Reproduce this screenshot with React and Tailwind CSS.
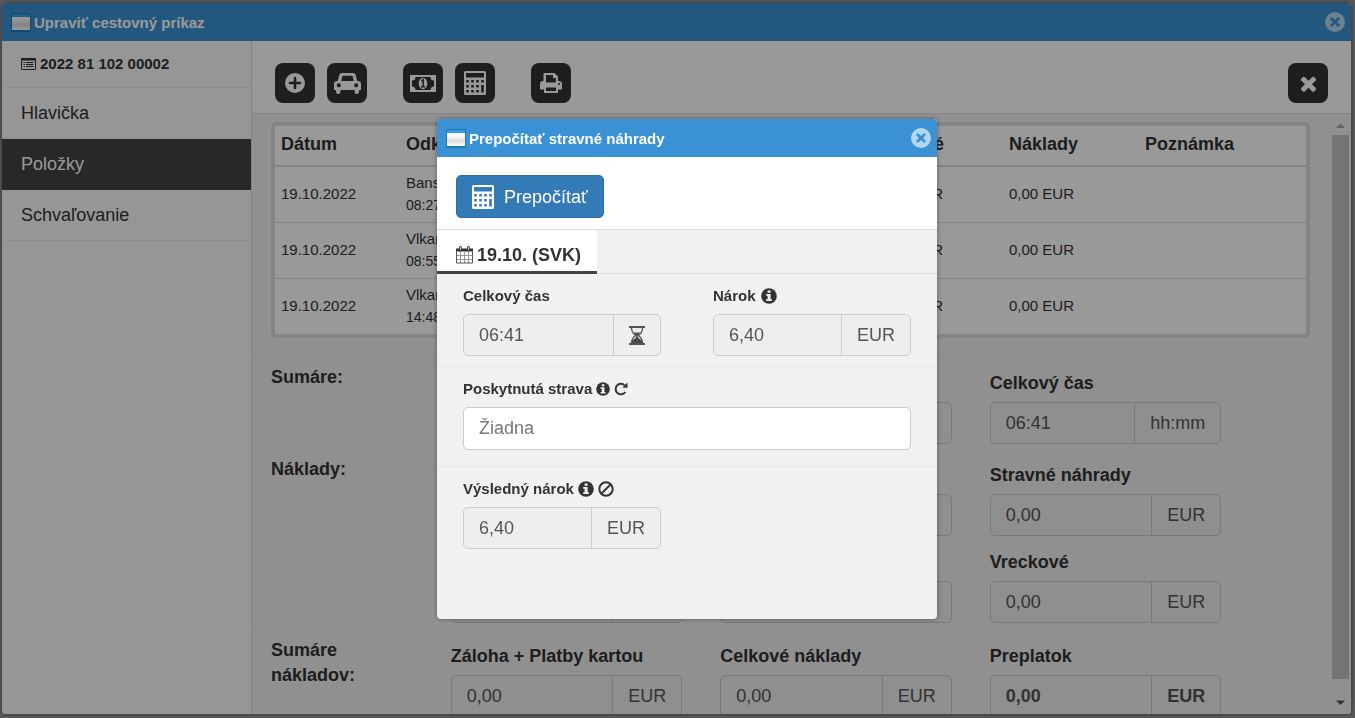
import { useState } from "react";

const MENU = ["Hlavička", "Položky", "Schvaľovanie"];

const TRIPS = [
  { date: "19.10.2022", from: "Banská", start: "08:27" },
  { date: "19.10.2022", from: "Vlkanová", start: "08:55" },
  { date: "19.10.2022", from: "Vlkanová", start: "14:48" },
];

function WindowIcon() {
  return (
    <svg width="20" height="19" viewBox="0 0 20 19" aria-hidden="true">
      <defs>
        <linearGradient id="pane" x1="0" y1="0" x2="0" y2="1">
          <stop offset="0" stopColor="#fff" />
          <stop offset="0.3" stopColor="#f6f6f6" />
          <stop offset="0.6" stopColor="#dcdcdc" />
          <stop offset="1" stopColor="#fff" />
        </linearGradient>
      </defs>
      <rect width="20" height="19" rx="1" fill="#1c7db4" />
      <rect x="1" y="1" width="18" height="4" fill="#3a9bdc" />
      <rect x="1" y="4" width="18" height="13" fill="url(#pane)" />
    </svg>
  );
}

function CloseCircle() {
  return (
    <svg width="20" height="20" viewBox="0 0 20 20" aria-hidden="true">
      <circle cx="10" cy="10" r="10" fill="#fff" fillOpacity="0.62" />
      <path d="M6.700 6.700l6.600 6.600M13.300 6.700l-6.600 6.600" stroke="#3a92d4" strokeWidth="2.800" strokeLinecap="round" />
    </svg>
  );
}

function PlusIcon() {
  return (
    <svg width="20" height="20" viewBox="0 0 20 20" aria-hidden="true">
      <circle cx="10" cy="10" r="10" fill="currentColor" />
      <path d="M10 5v10M5 10h10" stroke="#333" strokeWidth="2.600" strokeLinecap="round" />
    </svg>
  );
}

function CarIcon() {
  return (
    <svg width="27" height="21" viewBox="0 0 27 21" fill="currentColor" aria-hidden="true">
      <path
        fillRule="evenodd"
        d="M8 0h11q2.200 0 2.800 2.200L23.200 8h.8q3 0 3 3v5.500q0 .5-.5.500H25v1.700a2.200 2.200 0 0 1-4.400 0V17H6.400v1.700a2.200 2.200 0 0 1-4.400 0V17H.5q-.5 0-.5-.5V11q0-3 3-3h.8L5.200 2.200Q5.800 0 8 0zM7.200 8h12.600l-1.200-4.700q-.1-.5-.5-.5H8.900q-.4 0-.5.5zM4.800 10.200a2.100 2.100 0 1 0 0 4.200 2.100 2.100 0 0 0 0-4.200zM22.200 10.200a2.100 2.100 0 1 0 0 4.200 2.100 2.100 0 0 0 0-4.200z"
      />
    </svg>
  );
}

function MoneyIcon() {
  return (
    <svg width="26" height="17" viewBox="0 0 26 17" aria-hidden="true">
      <path
        fill="currentColor"
        fillRule="evenodd"
        d="M0 0h26v17H0zM5.500 2A3.500 3.500 0 0 1 2 5.500v6A3.500 3.500 0 0 1 5.500 15h15a3.500 3.500 0 0 1 3.500-3.500v-6A3.500 3.500 0 0 1 20.500 2z"
      />
      <ellipse cx="13" cy="8.500" rx="4.300" ry="5.700" fill="currentColor" />
      <path d="M11.300 6.200l1.900-1.400v6.400M11 11.800h4.200" fill="none" stroke="#333" strokeWidth="1.500" />
    </svg>
  );
}

function CalculatorIcon() {
  return (
    <svg width="22" height="24" viewBox="0 0 22 24" fill="currentColor" aria-hidden="true">
      <path
        fillRule="evenodd"
        d="M1.500 0h19Q22 0 22 1.500v21q0 1.500-1.500 1.500h-19Q0 24 0 22.500v-21Q0 0 1.500 0zM2 2v4.500h18V2zM2.200 9v2.600H4.800V9zM7.200 9v2.600H9.800V9zM12.200 9v2.600H14.800V9zM17.200 9v2.600H19.800V9zM2.200 14v2.600H4.800V14zM7.200 14v2.600H9.800V14zM12.200 14v2.600H14.800V14zM17.200 14v7.600H19.800V14zM2.200 19v2.600H4.800V19zM7.200 19v2.600H9.800V19zM12.200 19v2.600H14.800V19z"
      />
    </svg>
  );
}

function PrintIcon() {
  return (
    <svg width="22" height="20" viewBox="0 0 22 20" fill="currentColor" aria-hidden="true">
      <path
        fillRule="evenodd"
        d="M4.500 0H14.500L18 3.500V8h1q3 0 3 3v5.500h-4V20H4v-3.500H0V11q0-3 3-3h.5V1q0-1 1-1zM6 2v7.500h9.800V5H13V2zM6 14.500V18h10v-3.500zM19 10a1 1 0 1 0 0 2 1 1 0 0 0 0-2z"
      />
    </svg>
  );
}

function TimesIcon() {
  return (
    <svg width="23" height="23" viewBox="0 0 1792 1792" fill="currentColor" aria-hidden="true">
      <path d="M1490 1322q0 40-28 68l-136 136q-28 28-68 28t-68-28l-294-294-294 294q-28 28-68 28t-68-28l-136-136q-28-28-28-68t28-68l294-294-294-294q-28-28-28-68t28-68l136-136q28-28 68-28t68 28l294 294 294-294q28-28 68-28t68 28l136 136q28 28 28 68t-28 68l-294 294 294 294q28 28 28 68z" />
    </svg>
  );
}

function ListIcon() {
  return (
    <svg width="15" height="12" viewBox="0 0 15 12" aria-hidden="true">
      <rect x="0.500" y="0.500" width="14" height="11" rx="0.500" fill="none" stroke="#333" />
      <path d="M0 1.500h15" stroke="#333" strokeWidth="2" />
      <path d="M2.500 4.500h1.500M2.500 6.500h1.500M2.500 8.500h1.500M5 4.500h7.500M5 6.500h7.500M5 8.500h7.500" stroke="#333" />
    </svg>
  );
}

function CalendarIcon() {
  return (
    <svg width="17" height="18" viewBox="0 0 17 18" aria-hidden="true">
      <path d="M0 2.500h17v3H0z" fill="#333" />
      <path d="M4.500 6v11M8.500 6v11M12.500 6v11M1 9.500h15M1 13.500h15" fill="none" stroke="#999" />
      <path d="M.5 5v12h16V5" fill="none" stroke="#555" />
      <path d="M4.500 1.300v2.700M12.500 1.300v2.700" stroke="#333" strokeWidth="2.600" strokeLinecap="round" />
      <path d="M4.500 1.200v2.800M12.500 1.200v2.800" stroke="#ddd" strokeWidth="0.900" />
    </svg>
  );
}

function HourglassIcon() {
  return (
    <svg width="16" height="19" viewBox="0 0 16 19" aria-hidden="true">
      <path d="M0 1h16M0 18h16" stroke="#555" strokeWidth="1.800" />
      <path d="M2.500 2c0 4 1.500 5.500 4 7.500-2.500 2-4 3.500-4 7.500M13.500 2c0 4-1.500 5.500-4 7.500 2.500 2 4 3.500 4 7.500" fill="none" stroke="#555" strokeWidth="1.300" />
      <path d="M4.500 6.500h7L8.700 9.500l.3 2 4 3.200V17H3v-2.300l4-3.200.3-2z" fill="#4a4a4a" />
    </svg>
  );
}

function InfoIcon({ size = 16 }) {
  return (
    <svg width={size} height={size} viewBox="0 0 16 16" aria-hidden="true">
      <circle cx="8" cy="8" r="7.800" fill="#333" />
      <path d="M6.600 2.500h3v2.300h-3zM5.200 6h4.400v5.300h1.300V13H5.200v-1.700h1.400V7.700H5.200z" fill="#f1f1f1" />
    </svg>
  );
}

function RepeatIcon() {
  return (
    <svg width="14" height="14" viewBox="0 0 14 14" aria-hidden="true">
      <path d="M10.600 3.200A5.300 5.300 0 1 0 11.300 10" fill="none" stroke="#333" strokeWidth="2" />
      <path d="M13.500 0.500v5.200H8.300z" fill="#333" />
    </svg>
  );
}

function BanIcon() {
  return (
    <svg width="16" height="16" viewBox="0 0 16 16" fill="none" stroke="#333" strokeWidth="2" aria-hidden="true">
      <circle cx="8" cy="8" r="6.700" />
      <path d="M12.500 3.500l-9 9" />
    </svg>
  );
}

function ToolButton({ label, children, className = "" }) {
  return (
    <button
      type="button"
      aria-label={label}
      className={`flex size-10 items-center justify-center rounded-lg bg-[#333] text-white ${className}`}
    >
      {children}
    </button>
  );
}

function InputGroup({ id, value, addon, bold = false }) {
  return (
    <div
      className={`flex h-[42px] overflow-hidden rounded-[5px] border border-[#ccc] bg-[#eee] text-lg text-[#555] ${
        bold ? "font-bold" : ""
      }`}
    >
      <input id={id} readOnly value={value} className="w-0 min-w-0 flex-1 bg-transparent pl-[15px] outline-none" />
      <span className="flex items-center border-l border-[#ccc] px-[15px]">{addon}</span>
    </div>
  );
}

function SummaryField({ id, label, value = "0,00", addon = "EUR", bold, className = "" }) {
  return (
    <div className={`px-[19px] ${className}`}>
      <label htmlFor={id} className="mb-[7px] block text-lg leading-6 font-bold">
        {label}
      </label>
      <InputGroup id={id} value={value} addon={addon} bold={bold} />
    </div>
  );
}

function SummaryTitle({ children }) {
  return <h2 className="col-span-2 px-[19px] pt-[7px] text-lg leading-[25px] font-bold">{children}</h2>;
}

function TripTable() {
  return (
    <div className="mr-5 ml-[19px] rounded-[5px] border-4 border-[#ddd] bg-white">
      <table className="w-full table-fixed text-left text-[15px]">
        <thead>
          <tr className="h-10 border-b-2 border-[#ddd] text-lg leading-6">
            <th className="w-[125px] px-1.5 pb-[3px]">Dátum</th>
            <th className="px-1.5 pb-[3px]">Odkiaľ</th>
            <th className="w-[131px] px-1.5 pb-[3px]">Stravné</th>
            <th className="w-[136px] px-1.5 pb-[3px]">Náklady</th>
            <th className="w-[167px] px-1.5 pb-[3px]">Poznámka</th>
          </tr>
        </thead>
        <tbody>
          {TRIPS.map((trip, index) => (
            <tr key={index} className="h-14 border-b border-[#ddd] last:border-b-0">
              <td className="px-1.5">{trip.date}</td>
              <td className="px-1.5 leading-[22px]">
                {trip.from}
                <div className="text-sm leading-[22px]">{trip.start}</div>
              </td>
              <td className="px-1.5">0,00 EUR</td>
              <td className="px-1.5">0,00 EUR</td>
              <td className="px-1.5"></td>
            </tr>
          ))}
        </tbody>
      </table>
    </div>
  );
}

function Summary() {
  return (
    <div className="mt-[19px]">
      <div className="grid grid-cols-12 border-t border-[#e7e7e7] pb-1.5">
        <SummaryTitle>Sumáre:</SummaryTitle>
        <SummaryField id="distance" label="Vzdialenosť" addon="km" className="col-span-3 col-start-6 pt-[13px]" />
        <SummaryField id="total-time" label="Celkový čas" value="06:41" addon="hh:mm" className="col-span-3 pt-[13px]" />
      </div>
      <div className="grid grid-cols-12 gap-y-px pb-[7px]">
        <SummaryTitle>Náklady:</SummaryTitle>
        <SummaryField id="lodging" label="Ubytovanie" className="col-span-3 col-start-6 pt-[13px]" />
        <SummaryField id="meals" label="Stravné náhrady" className="col-span-3 pt-[13px]" />
        <SummaryField id="fuel" label="Palivo" className="col-span-3 col-start-3 pt-[13px]" />
        <SummaryField id="other" label="Iné náklady" className="col-span-3 pt-[13px]" />
        <SummaryField id="pocket" label="Vreckové" className="col-span-3 pt-[13px]" />
      </div>
      <div className="grid grid-cols-12 border-t border-[#e7e7e7]">
        <SummaryTitle>Sumáre nákladov:</SummaryTitle>
        <SummaryField id="advance" label="Záloha + Platby kartou" className="col-span-3 pt-[13px]" />
        <SummaryField id="total-cost" label="Celkové náklady" className="col-span-3 pt-[13px]" />
        <SummaryField id="overpaid" label="Preplatok" bold className="col-span-3 pt-[13px]" />
      </div>
    </div>
  );
}

function ScrollBar() {
  return (
    <div aria-hidden="true" className="mr-0.5 flex w-[17px] shrink-0 flex-col items-center pt-1 pb-[3px]">
      <svg width="17" height="17" viewBox="0 0 17 17">
        <path d="M4 10l4.500-4.500L13 10z" fill="#a3a3a3" />
      </svg>
      <div className="mb-[15px] w-full flex-1 bg-[#c1c1c1]" />
      <svg width="17" height="17" viewBox="0 0 17 17">
        <path d="M4 6.500h9L8.500 11z" fill="#505050" />
      </svg>
    </div>
  );
}

function RecalculateDialog({ onClose }) {
  const [meals, setMeals] = useState("");

  return (
    <div
      role="dialog"
      aria-label="Prepočítať stravné náhrady"
      className="flex h-[500px] w-[500px] flex-col overflow-hidden rounded bg-[#f1f1f1] shadow-[0_0_5px_rgba(0,0,0,0.4)]"
    >
      <header className="flex h-[38px] shrink-0 items-center gap-[3px] bg-[#3a92d4] pr-1.5 pl-[9px] text-[15px] font-bold text-white">
        <WindowIcon />
        <h2 className="pt-0.5">Prepočítať stravné náhrady</h2>
        <button type="button" aria-label="Zavrieť" onClick={onClose} className="ml-auto">
          <CloseCircle />
        </button>
      </header>

      <div className="border-b border-[#ddd] bg-white px-[19px] pt-[18px] pb-[11px]">
        <button
          type="button"
          className="flex h-[43px] items-center gap-2.5 rounded-[5px] border border-[#2e6da4] bg-[#337ab7] px-[15px] text-lg leading-6 text-white"
        >
          <CalculatorIcon />
          Prepočítať
        </button>
      </div>

      <div role="tablist" className="flex h-11 border-b border-[#ddd]">
        <button
          type="button"
          role="tab"
          aria-selected="true"
          className="-mb-px flex items-center gap-1 rounded-tr border-b-[3px] border-[#444] bg-white pt-2 pr-4 pl-[19px] text-lg font-bold"
        >
          <CalendarIcon />
          19.10. (SVK)
        </button>
      </div>

      <div className="grid grid-cols-2 border-b border-[#e7e7e7] py-2.5 text-[15px]">
        <div className="px-[26px]">
          <label htmlFor="dialog-time" className="mb-1.5 block leading-6 font-bold">Celkový čas</label>
          <InputGroup id="dialog-time" value="06:41" addon={<HourglassIcon />} />
        </div>
        <div className="px-[26px]">
          <label htmlFor="dialog-claim" className="mb-1.5 flex items-center gap-[5px] leading-6 font-bold">
            Nárok <InfoIcon />
          </label>
          <InputGroup id="dialog-claim" value="6,40" addon="EUR" />
        </div>
      </div>

      <div className="border-b border-[#e7e7e7] px-[26px] pt-2.5 pb-4 text-[15px]">
        <label htmlFor="dialog-meals" className="mb-1.5 flex items-center gap-1 leading-6 font-bold">
          Poskytnutá strava <InfoIcon size={14} /> <RepeatIcon />
        </label>
        <input
          id="dialog-meals"
          value={meals}
          onChange={(e) => setMeals(e.target.value)}
          placeholder="Žiadna"
          className="h-[43px] w-full rounded-[5px] border border-[#ccc] bg-white px-[15px] text-lg text-[#555] outline-none placeholder:text-[#777]"
        />
      </div>

      <div className="grid grid-cols-2 py-2.5 text-[15px]">
        <div className="px-[26px]">
          <label htmlFor="dialog-result" className="mb-1.5 flex items-center gap-1 leading-6 font-bold">
            Výsledný nárok <InfoIcon /> <BanIcon />
          </label>
          <InputGroup id="dialog-result" value="6,40" addon="EUR" />
        </div>
      </div>
    </div>
  );
}

export default function App() {
  const [active, setActive] = useState("Položky");
  const [isDialogOpen, setIsDialogOpen] = useState(true);

  return (
    <div className="h-screen overflow-hidden bg-[#999] pt-[3px] pr-1 pb-1 pl-0.5 font-['Liberation_Sans',Arial,sans-serif] text-[#333]">
      <div className="flex h-full flex-col overflow-hidden rounded bg-white shadow-[0_0_5px_rgba(0,0,0,0.5)]">
        <header className="flex h-[38px] shrink-0 items-center gap-[3px] bg-[#3a92d4] pr-1.5 pl-[9px] text-[15px] font-bold text-white">
          <WindowIcon />
          <h1 className="pt-0.5">Upraviť cestovný príkaz</h1>
          <button type="button" aria-label="Zavrieť okno" className="ml-auto">
            <CloseCircle />
          </button>
        </header>

        <div className="flex min-h-0 flex-1">
          <nav className="w-[250px] shrink-0 border-r border-[#ddd] bg-[#fbfbfb]">
            <div className="flex h-[47px] items-center gap-1 border-b border-[#eee] px-[19px] text-[15px] font-bold">
              <ListIcon />
              2022 81 102 00002
            </div>
            {MENU.map((item) => (
              <button
                key={item}
                type="button"
                onClick={() => setActive(item)}
                className={`flex h-[51px] w-full items-center border-b px-[19px] text-lg ${
                  item === active ? "border-[#434343] bg-[#434343] text-white" : "border-[#eee]"
                }`}
              >
                {item}
              </button>
            ))}
          </nav>

          <main className="flex min-w-0 flex-1 flex-col">
            <div className="flex h-[73px] shrink-0 items-center gap-3 border-b border-[#ddd] px-[23px] pt-3">
              <ToolButton label="Pridať"><PlusIcon /></ToolButton>
              <ToolButton label="Vozidlo"><CarIcon /></ToolButton>
              <ToolButton label="Platby" className="ml-6"><MoneyIcon /></ToolButton>
              <ToolButton label="Prepočítať"><CalculatorIcon /></ToolButton>
              <ToolButton label="Tlačiť" className="ml-6"><PrintIcon /></ToolButton>
              <ToolButton label="Zrušiť" className="ml-auto"><TimesIcon /></ToolButton>
            </div>

            <div className="flex min-h-0 flex-1 bg-[#f1f1f1]">
              <div className="mr-0.5 min-w-0 flex-1 overflow-hidden pt-2">
                <TripTable />
                <Summary />
              </div>
              <ScrollBar />
            </div>
          </main>
        </div>
      </div>

      {isDialogOpen && (
        <div className="fixed inset-0 flex items-center justify-center bg-black/40 pt-5 pl-[19px]">
          <RecalculateDialog onClose={() => setIsDialogOpen(false)} />
        </div>
      )}
    </div>
  );
}
